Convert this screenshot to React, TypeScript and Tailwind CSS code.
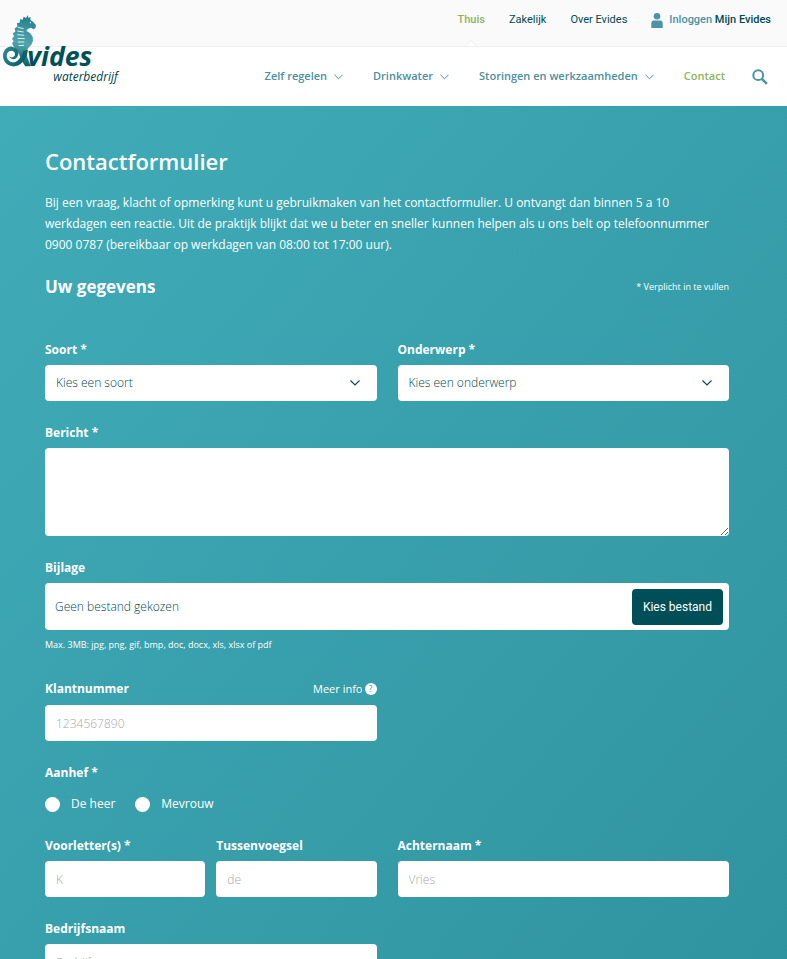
import { useRef, useState } from "react";
import type { ReactNode } from "react";

const topLinks = ["Zakelijk", "Over Evides"];
const mainLinks = ["Zelf regelen", "Drinkwater", "Storingen en werkzaamheden"];

const inputClass =
  "block h-9 w-full rounded bg-white px-[11px] text-xs font-light text-[#004a54] placeholder:text-[#a9a9a9] focus:outline-none focus:ring-2 focus:ring-[#004a54]";

function Chevron({ className }: { className?: string }) {
  return (
    <svg viewBox="0 0 10 6" className={className} fill="none" stroke="currentColor" strokeWidth="1.1">
      <path d="M0.5 0.5 L5 5 L9.5 0.5" />
    </svg>
  );
}

function Logo() {
  return (
    <svg viewBox="0 0 390 318" className="h-[106px] w-[130px]" role="img" aria-label="Evides waterbedrijf">
      <defs>
        <linearGradient id="seahorse" gradientUnits="userSpaceOnUse" x1="90" y1="50" x2="50" y2="200">
          <stop offset="0" stopColor="#1f7f8b" />
          <stop offset="0.3" stopColor="#3f97a2" />
          <stop offset="0.55" stopColor="#4fa5ae" />
          <stop offset="1" stopColor="#00545e" />
        </linearGradient>
        <linearGradient id="tail" gradientUnits="userSpaceOnUse" x1="10" y1="150" x2="90" y2="190">
          <stop offset="0" stopColor="#2c8994" />
          <stop offset="1" stopColor="#00505a" />
        </linearGradient>
      </defs>
      <path
        fill="url(#seahorse)"
        d="M84 45 L85 54 L92 51 L91 60 L99 65 L108 76 L106 85 L100 88 L93 83 L83 87 L79 93 L90 99 L98 110 L99 122 L94 134 L84 145 L80 156 L82 172 L92 199 L76 199 L66 184 L56 160 L42 141 L36 130 L41 124 L36 116 L42 109 L38 100 L46 95 L44 85 L52 80 L51 69 L59 68 L60 58 L68 59 L71 50 L78 54 Z"
      />
      <g stroke="#ffffff" strokeWidth="2.5" fill="none">
        <path d="M54 82 L71 86" />
        <path d="M52 93 L71 96" />
        <path d="M52 104 L73 106" />
        <path d="M53 115 L74 116" />
        <path d="M54 126 L73 126" />
        <path d="M56 137 L72 136" />
      </g>
      <circle cx="91" cy="68" r="2" fill="#ffffff" />
      <path
        fill="url(#tail)"
        d="M27 169 C35 176 45 171 45 163 C45 154 36 150 28 154 C16 160 18 181 33 186 C50 191 63 174 70 152 L84 150 C79 180 60 201 38 199 C19 197 8 182 9 166 C10 149 23 138 36 140 C50 142 58 153 54 166 C50 180 34 182 27 169 Z"
      />
      <text x="82" y="198" fontSize="80" fontWeight="700" fontStyle="italic" fill="#00505a">
        vides
      </text>
      <text x="160" y="244" fontSize="36" fontWeight="500" fontStyle="italic" fill="#003f4a">
        waterbedrijf
      </text>
    </svg>
  );
}

function Header() {
  return (
    <header className="relative bg-white">
      <a href="#" className="absolute top-0 left-0">
        <Logo />
      </a>
      <div className="flex h-[47px] items-start justify-end gap-6 border-b border-[#f0f0f0] bg-[#fafafa] pr-4 font-[Roboto,sans-serif] text-[11px] leading-10 text-[#004a54]">
        <a href="#" className="relative h-full font-medium text-[#8ab55a]">
          Thuis
          <svg viewBox="0 0 12 6" className="absolute bottom-0 left-1/2 h-[6px] w-3 -translate-x-1/2">
            <path d="M0 6 L6 0.5 L12 6" fill="#ffffff" stroke="#ececec" />
          </svg>
        </a>
        {topLinks.map((link) => (
          <a key={link} href="#">
            {link}
          </a>
        ))}
        <a href="#" className="flex items-center gap-1.5">
          <svg viewBox="0 0 12 15" className="h-[15px] w-3" fill="#4b93a7">
            <circle cx="6" cy="3.3" r="3.3" />
            <path d="M0.3 15 V10 Q0.3 7.6 2.8 7.6 H9.2 Q11.7 7.6 11.7 10 V15 Z" />
          </svg>
          <span className="font-medium">
            <span className="text-[#4b93a7]">Inloggen</span> Mijn Evides
          </span>
        </a>
      </div>
      <div className="flex h-[59px] items-center justify-end gap-[27px] pr-[19px]">
        <nav className="flex items-center gap-[30px] text-[11px] font-semibold text-[#4b8fa0]">
          {mainLinks.map((link) => (
            <a key={link} href="#" className="flex items-center gap-[7px]">
              {link}
              <Chevron className="h-[6px] w-[9px]" />
            </a>
          ))}
          <a href="#" className="text-[#8ab55a]">
            Contact
          </a>
        </nav>
        <button type="button" aria-label="Zoeken">
          <svg viewBox="0 0 16 16" className="h-4 w-4" fill="none" stroke="#4b93a7">
            <circle cx="6.2" cy="6.2" r="4.9" strokeWidth="2" />
            <path d="M9.8 9.8 L14.9 14.9" strokeWidth="2.6" />
          </svg>
        </button>
      </div>
    </header>
  );
}

function Label({ htmlFor, children }: { htmlFor: string; children: ReactNode }) {
  return (
    <label htmlFor={htmlFor} className="block text-xs leading-5 font-bold">
      {children}
    </label>
  );
}

function TextField({ id, label, placeholder }: { id: string; label: string; placeholder: string }) {
  return (
    <div className="flex flex-col gap-[5px]">
      <Label htmlFor={id}>{label}</Label>
      <input id={id} type="text" placeholder={placeholder} className={inputClass} />
    </div>
  );
}

function SelectField({ id, label, placeholder, options }: { id: string; label: string; placeholder: string; options: string[] }) {
  return (
    <div className="flex flex-col gap-[5px]">
      <Label htmlFor={id}>{label}</Label>
      <div className="relative">
        <select id={id} defaultValue="" className={`${inputClass} appearance-none`}>
          <option value="">{placeholder}</option>
          {options.map((o) => (
            <option key={o}>{o}</option>
          ))}
        </select>
        <Chevron className="pointer-events-none absolute top-[15px] right-[17px] h-[6px] w-[10px] text-[#004a54]" />
      </div>
    </div>
  );
}

export default function App() {
  const fileRef = useRef<HTMLInputElement>(null);
  const [fileName, setFileName] = useState("");

  return (
    <div className="min-h-screen font-['Open_Sans','Noto_Sans',sans-serif]">
      <Header />
      <main className="bg-linear-to-br from-[#40acb8] to-[#2f939f] pt-[41px] pr-[58px] pb-8 pl-[45px] text-white">
        <h1 className="text-[22px] leading-7 font-semibold">Contactformulier</h1>
        <p className="mt-[17px] text-xs leading-[21px]">
          Bij een vraag, klacht of opmerking kunt u gebruikmaken van het contactformulier. U ontvangt dan binnen 5 a 10
          werkdagen een reactie. Uit de praktijk blijkt dat we u beter en sneller kunnen helpen als u ons belt op
          telefoonnummer 0900 0787 (bereikbaar op werkdagen van 08:00 tot 17:00 uur).
        </p>

        <form className="mt-5 flex flex-col gap-[22px]" onSubmit={(e) => e.preventDefault()}>
          <div className="mb-[19px] flex items-center justify-between">
            <h2 className="text-[17px] leading-6 font-bold">Uw gegevens</h2>
            <span className="text-[9px]">* Verplicht in te vullen</span>
          </div>

          <div className="grid grid-cols-2 gap-[21px]">
            <SelectField id="soort" label="Soort *" placeholder="Kies een soort" options={["Vraag", "Klacht", "Opmerking"]} />
            <SelectField id="onderwerp" label="Onderwerp *" placeholder="Kies een onderwerp" options={["Factuur", "Verhuizen"]} />
          </div>

          <div className="flex flex-col gap-[5px]">
            <Label htmlFor="bericht">Bericht *</Label>
            <textarea id="bericht" className="block h-[88px] w-full resize rounded bg-white p-3 text-xs text-[#004a54] focus:outline-none" />
          </div>

          <div className="mb-[2px] flex flex-col gap-[5px]">
            <Label htmlFor="bijlage">Bijlage</Label>
            <div className="flex h-[47px] items-center justify-between rounded bg-white pr-1.5 pl-2.5">
              <span className="text-xs font-light text-[#004a54]">{fileName || "Geen bestand gekozen"}</span>
              <input
                ref={fileRef}
                id="bijlage"
                type="file"
                className="hidden"
                onChange={(e) => setFileName(e.target.files?.[0]?.name || "")}
              />
              <button
                type="button"
                onClick={() => fileRef.current?.click()}
                className="h-9 rounded bg-[#004f58] px-[11px] font-[Roboto,sans-serif] text-xs text-white hover:bg-[#003f47]"
              >
                Kies bestand
              </button>
            </div>
            <p className="text-[9px] leading-5">Max. 3MB: jpg, png, gif, bmp, doc, docx, xls, xlsx of pdf</p>
          </div>

          <div className="grid grid-cols-2 gap-[21px]">
            <div className="flex flex-col gap-1.5">
              <div className="flex items-center justify-between">
                <Label htmlFor="klantnummer">Klantnummer</Label>
                <button type="button" className="flex items-center gap-0.5 text-[11px]">
                  Meer info
                  <span className="flex h-3 w-3 items-center justify-center rounded-full bg-white text-[9px] leading-3 text-[#3aa0ac]">
                    ?
                  </span>
                </button>
              </div>
              <input id="klantnummer" type="text" placeholder="1234567890" className={inputClass} />
            </div>
          </div>

          <fieldset>
            <legend className="text-xs leading-5 font-bold">Aanhef *</legend>
            <div className="mt-[11px] flex gap-5 text-xs leading-5">
              {["De heer", "Mevrouw"].map((aanhef) => (
                <label key={aanhef} className="flex items-center gap-[11px]">
                  <input
                    type="radio"
                    name="aanhef"
                    className="h-[15px] w-[15px] appearance-none rounded-full border-white bg-white checked:border-4 checked:bg-[#004a54]"
                  />
                  {aanhef}
                </label>
              ))}
            </div>
          </fieldset>

          <div className="grid grid-cols-2 gap-[21px]">
            <div className="grid grid-cols-2 gap-[11px]">
              <TextField id="voorletters" label="Voorletter(s) *" placeholder="K" />
              <TextField id="tussenvoegsel" label="Tussenvoegsel" placeholder="de" />
            </div>
            <TextField id="achternaam" label="Achternaam *" placeholder="Vries" />
          </div>

          <div className="grid grid-cols-2 gap-[21px]">
            <TextField id="bedrijfsnaam" label="Bedrijfsnaam" placeholder="Bedrijf" />
          </div>
        </form>
      </main>
    </div>
  );
}
